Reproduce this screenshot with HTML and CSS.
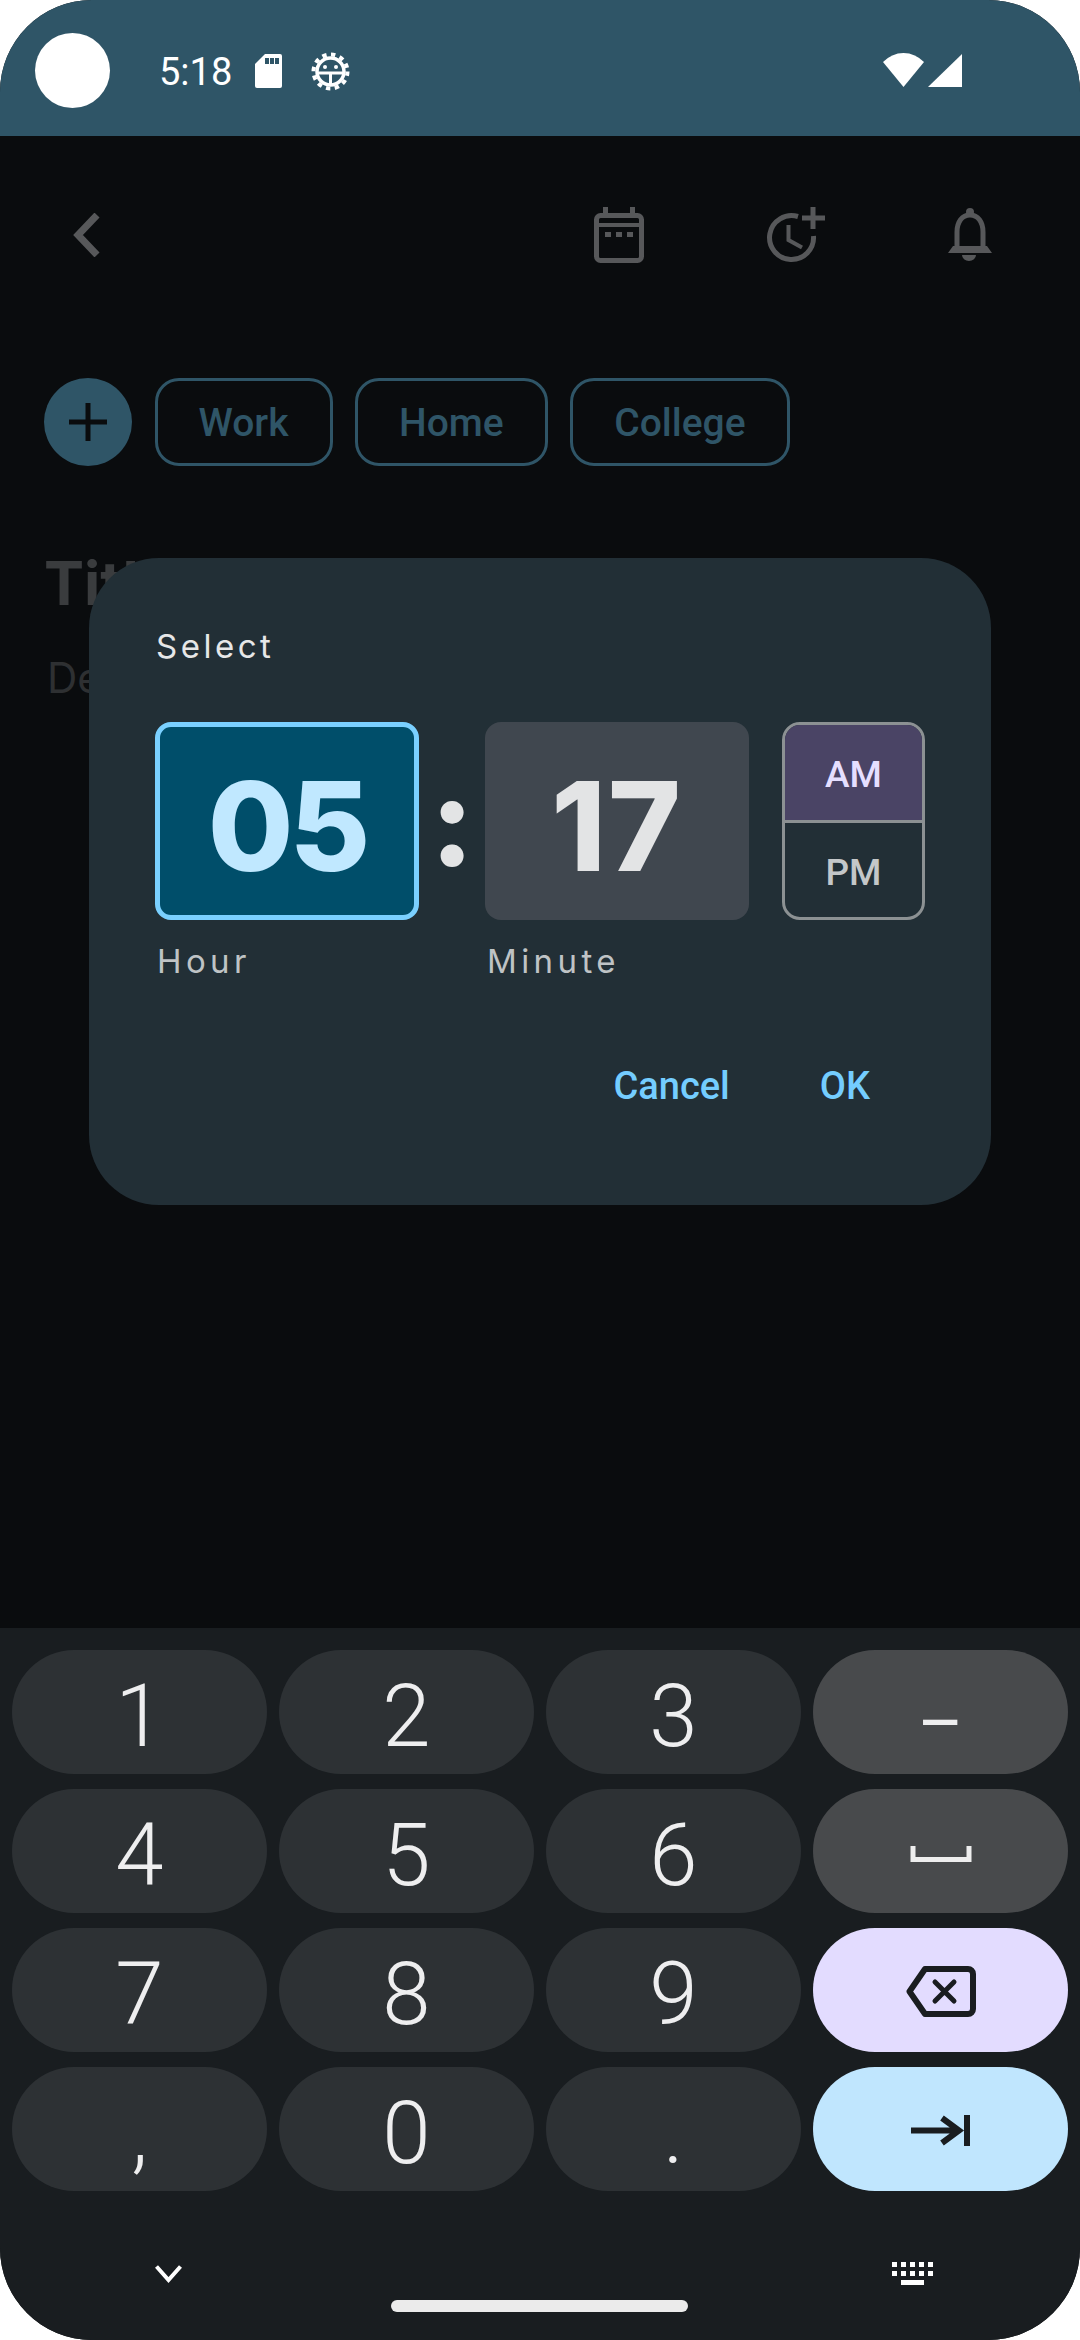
FILE: index.html
```html
<!DOCTYPE html>
<html>
<head>
	<title>Select time</title>
	<link rel="stylesheet" href="styles.css">
</head>
<body>
<div class="phone">
	<div class="status-bar">
		<div class="camera"></div>
		<span class="clock-text">5:18</span>
		<svg class="sd-icon" width="27" height="34" viewBox="0 0 27 34">
			<path fill="#fff" d="M10 0H25a2 2 0 0 1 2 2V32a2 2 0 0 1-2 2H2a2 2 0 0 1-2-2V10Z"/>
			<path fill="#2f5567" d="M10 4h4v6h-4zM15 4h4v6h-4zM20 4h4v6h-4z"/>
		</svg>
		<svg class="bug-icon" width="39" height="39" viewBox="0 0 39 39">
			<circle cx="19.5" cy="19.5" r="13.5" fill="none" stroke="#fff" stroke-width="3.5"/>
			<circle cx="19.5" cy="19.5" r="17" fill="none" stroke="#fff" stroke-width="4" stroke-dasharray="4.4 4.5"/>
			<path fill="none" stroke="#fff" stroke-width="3" d="M6 21H33M19.5 21V33"/>
			<circle cx="14" cy="15" r="2" fill="#fff"/>
			<circle cx="25" cy="15" r="2" fill="#fff"/>
		</svg>
		<svg class="wifi-icon" width="41" height="34" viewBox="0 0 41 34">
			<path fill="#fff" d="M20.5 34L0 9A28 28 0 0 1 41 9Z"/>
		</svg>
		<svg class="signal-icon" width="34" height="33" viewBox="0 0 34 33">
			<path fill="#fff" d="M34 0V33H0Z"/>
		</svg>
	</div>

	<div class="main">
		<div class="top-bar">
			<svg class="back-icon" width="27" height="44" viewBox="0 0 27 44">
				<path fill="none" stroke="#57585a" stroke-width="7" d="M24 2L5 22L24 42"/>
			</svg>
			<svg class="calendar-icon" width="50" height="56" viewBox="0 0 50 56">
				<rect x="2.5" y="8.5" width="45" height="45" rx="4" fill="none" stroke="#57585a" stroke-width="5"/>
				<path fill="#57585a" d="M9 0h5v7H9zM36 0h5v7h-5zM3 16h44v4H3zM11 25h6v5h-6zM22 25h6v5h-6zM33 25h6v5h-6z"/>
			</svg>
			<svg width="58" height="56" viewBox="0 0 58 56">
				<path fill="none" stroke="#57585a" stroke-width="5" d="M46.5 29A22 22 0 1 1 31 9.5"/>
				<path fill="none" stroke="#57585a" stroke-width="4" d="M21.5 18V33L35 40.500"/>
				<path fill="none" stroke="#57585a" stroke-width="5" d="M35 11H58M46 0V22"/>
			</svg>
			<svg width="44" height="54" viewBox="0 0 44 54">
				<circle cx="22" cy="4" r="4" fill="#57585a"/>
				<path fill="none" stroke="#57585a" stroke-width="5" d="M9 42V24C9 14 14 7 22 7C30 7 35 14 35 24V42"/>
				<path fill="#57585a" d="M0 45L5 38H39L44 45ZM14 47H28A7 6 0 0 1 14 47Z"/>
			</svg>
		</div>

		<div class="chip-row">
			<div class="add-btn">
				<svg width="38" height="38" viewBox="0 0 38 38">
					<path fill="none" stroke="#0a0c0e" stroke-width="5" d="M0 19H38M19 0V38"/>
				</svg>
			</div>
			<div class="chip">Work</div>
			<div class="chip">Home</div>
			<div class="chip">College</div>
		</div>

		<div class="title">Title</div>
		<div class="description">Description</div>

		<div class="dialog">
			<div class="dialog-label">Select</div>
			<div class="time-row">
				<div class="time-col">
					<div class="time-box hour">05</div>
					<div class="time-caption">Hour</div>
				</div>
				<div class="colon">:</div>
				<div class="time-col">
					<div class="time-box minute">17</div>
					<div class="time-caption">Minute</div>
				</div>
				<div class="ampm">
					<div class="ampm-item selected">AM</div>
					<div class="ampm-item">PM</div>
				</div>
			</div>
			<div class="dialog-buttons">
				<span>Cancel</span>
				<span>OK</span>
			</div>
		</div>
	</div>

	<div class="keyboard">
		<div class="keys">
			<div class="key">1</div>
			<div class="key">2</div>
			<div class="key">3</div>
			<div class="key func minus">–</div>
			<div class="key">4</div>
			<div class="key">5</div>
			<div class="key">6</div>
			<div class="key func">
				<svg class="space-icon" width="62" height="16" viewBox="0 0 62 16">
					<path fill="none" stroke="#eee" stroke-width="5" d="M3 0V13.500H59V0"/>
				</svg>
			</div>
			<div class="key">7</div>
			<div class="key">8</div>
			<div class="key">9</div>
			<div class="key backspace">
				<svg width="70" height="51" viewBox="0 0 70 51">
					<path fill="none" stroke="#1a1d20" stroke-width="6" stroke-linejoin="round" d="M3.500 25.500L19 3H62a5 5 0 0 1 5 5V43a5 5 0 0 1-5 5H19Z"/>
					<path fill="none" stroke="#1a1d20" stroke-width="5" stroke-linecap="round" d="M29 16L48 35M48 16L29 35"/>
				</svg>
			</div>
			<div class="key">,</div>
			<div class="key">0</div>
			<div class="key">.</div>
			<div class="key tab">
				<svg width="59" height="31" viewBox="0 0 59 31">
					<path fill="none" stroke="#1a1d20" stroke-width="6" d="M0 15.500H47M31 3L48 15.500L31 28"/>
					<path fill="#1a1d20" d="M53 0h6v31h-6z"/>
				</svg>
			</div>
		</div>

		<div class="nav-row">
			<svg width="27" height="23" viewBox="0 0 27 23">
				<path fill="none" stroke="#fff" stroke-width="4" d="M1.500 4.500L13.500 18L25.500 4.500"/>
			</svg>
			<svg width="41" height="23" viewBox="0 0 41 23">
				<path fill="#fff" d="M0 0h5v5H0zM9 0h5v5H9zM18 0h5v5h-5zM27 0h5v5h-5zM36 0h5v5h-5zM0 9h5v5H0zM9 9h5v5H9zM18 9h5v5h-5zM27 9h5v5h-5zM36 9h5v5h-5zM9 18h23v5H9z"/>
			</svg>
		</div>
		<div class="home-pill"></div>
	</div>
</div>
</body>
</html>
```

FILE: styles.css
```css
body {
	margin: 0;
	background-color: #fff;
}
.phone {
	width: 1080px;
	height: 2340px;
	display: flex;
	flex-direction: column;
	overflow: hidden;
	border-radius: 92px;
	background-color: #0a0c0e;
	font-family: Roboto, sans-serif;
}

/* status bar */
.status-bar {
	height: 136px;
	flex: none;
	display: flex;
	align-items: center;
	padding: 0 118px 0 35px;
	box-sizing: border-box;
	background-color: #2f5567;
	color: #fff;
}
.camera {
	width: 75px;
	height: 75px;
	border-radius: 50%;
	background-color: #fff;
	margin-top: 4px;
}
.clock-text {
	margin-left: 49px;
	font-size: 38px;
	line-height: 44px;
	margin-top: 8px;
}
.sd-icon {
	margin-left: 23px;
	margin-top: 6px;
}
.bug-icon {
	margin-left: 29px;
	margin-top: 6px;
}
.wifi-icon {
	margin-left: auto;
	margin-top: 4px;
}
.signal-icon {
	margin-left: 4px;
	margin-top: 5px;
}

/* page behind the dialog */
.main {
	flex: 1;
	position: relative;
}
.top-bar {
	display: flex;
	align-items: center;
	gap: 123px;
	padding: 71px 88px 0 73px;
}
.calendar-icon {
	margin-left: auto;
}
.chip-row {
	display: flex;
	gap: 22.5px;
	margin-top: 115px;
	padding-left: 44px;
}
.add-btn {
	width: 88px;
	height: 88px;
	border-radius: 50%;
	background-color: #2f5567;
	display: flex;
	align-items: center;
	justify-content: center;
}
.chip {
	height: 88px;
	box-sizing: border-box;
	padding: 0 41px;
	border: 3px solid #2f5567;
	border-radius: 24px;
	color: #2f5567;
	font-size: 39px;
	font-weight: 500;
	line-height: 84px;
}
.title {
	margin: 87px 0 0 44px;
	font-family: Inter, sans-serif;
	font-size: 60px;
	font-weight: 700;
	line-height: 60px;
	color: #3a3c3e;
}
.description {
	margin: 40px 0 0 47px;
	font-family: Inter, sans-serif;
	font-size: 42px;
	line-height: 50px;
	color: #2e3032;
}

/* time picker dialog */
.dialog {
	position: absolute;
	left: 89px;
	top: 422px;
	width: 902px;
	height: 647px;
	box-sizing: border-box;
	padding: 68px 0 0 66px;
	border-radius: 70px;
	background-color: #222f36;
}
.dialog-label {
	font-family: Inter, sans-serif;
	font-size: 33px;
	line-height: 40px;
	letter-spacing: 3.5px;
	color: #e6e7e8;
	padding-left: 1px;
}
.time-row {
	display: flex;
	margin-top: 56px;
}
.time-box {
	width: 264px;
	height: 198px;
	box-sizing: border-box;
	padding-top: 10px;
	border-radius: 16px;
	font-family: Inter, sans-serif;
	font-size: 124px;
	font-weight: 800;
	display: flex;
	align-items: center;
	justify-content: center;
}
.hour {
	border: 5px solid #7ad0ff;
	background-color: #004e6a;
	color: #c0e8ff;
	letter-spacing: -4px;
}
.minute {
	background-color: #40474f;
	color: #e3e4e5;
	letter-spacing: 2px;
}
.colon {
	width: 66px;
	height: 198px;
	font-family: Inter, sans-serif;
	font-size: 124px;
	font-weight: 800;
	line-height: 198px;
	text-align: center;
	color: #e3e4e5;
}
.time-caption {
	margin: 21px 0 0 2px;
	font-family: Inter, sans-serif;
	font-size: 33px;
	line-height: 40px;
	letter-spacing: 4.4px;
	color: #bfc3c5;
}
.ampm {
	width: 143px;
	height: 198px;
	box-sizing: border-box;
	margin-left: 33px;
	display: flex;
	flex-direction: column;
	overflow: hidden;
	border: 3px solid #8c9193;
	border-radius: 18px;
}
.ampm-item {
	flex: 1;
	display: flex;
	align-items: center;
	justify-content: center;
	box-sizing: border-box;
	padding-top: 5px;
	font-size: 37px;
	font-weight: 500;
	color: #c4c7c9;
}
.ampm-item.selected {
	background-color: #4a4465;
	border-bottom: 3px solid #8c9193;
	color: #e5dfff;
}
.dialog-buttons {
	display: flex;
	justify-content: flex-end;
	gap: 90px;
	margin-top: 83px;
	padding-right: 121px;
	font-size: 38px;
	font-weight: 500;
	line-height: 44px;
	color: #74cdff;
}

/* keyboard */
.keyboard {
	height: 712px;
	flex: none;
	box-sizing: border-box;
	padding-top: 22px;
	background-color: #191d20;
}
.keys {
	display: grid;
	grid-template-columns: repeat(4, 255px);
	grid-auto-rows: 124px;
	column-gap: 12px;
	row-gap: 15px;
	padding-left: 12px;
}
.key {
	display: flex;
	align-items: center;
	justify-content: center;
	box-sizing: border-box;
	padding-top: 8px;
	border-radius: 62px;
	background-color: #2d3134;
	color: #eeeeef;
	font-size: 87px;
	font-weight: 350;
	line-height: 116px;
}
.key svg {
	margin-top: -6px;
}
.key .space-icon {
	margin-top: -2px;
}
.func {
	background-color: #484a4c;
}
.minus {
	padding-top: 22px;
	font-size: 70px;
	font-weight: 400;
}
.backspace {
	background-color: #e3dcff;
}
.tab {
	background-color: #c0e6fe;
}
.nav-row {
	display: flex;
	justify-content: space-between;
	margin-top: 71px;
	padding: 0 147px 0 155px;
}
.home-pill {
	width: 297px;
	height: 12px;
	margin: 15px 0 0 391px;
	border-radius: 6px;
	background-color: #ebebeb;
}
```
